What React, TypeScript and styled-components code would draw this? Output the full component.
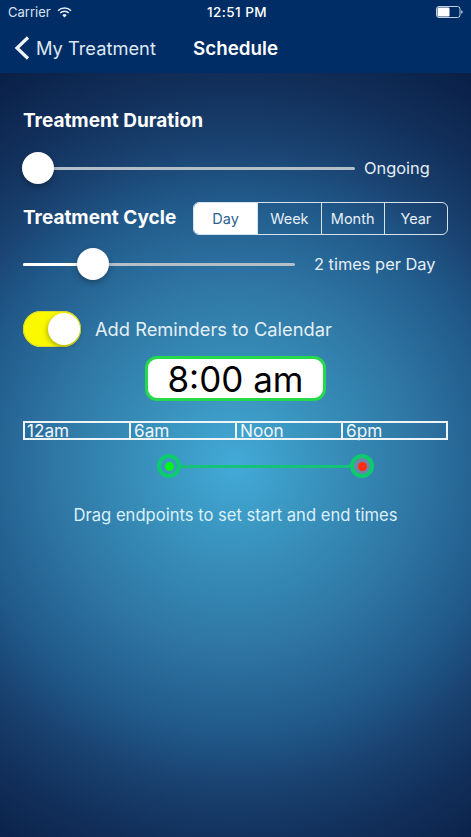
import React, { FC } from "react";
import styled, { createGlobalStyle } from "styled-components";

const GlobalStyle = createGlobalStyle`
    html, body {
        margin: 0;
        padding: 0;
        background: #0c2350;
    }
    * {
        box-sizing: border-box;
    }
`;

const Screen = styled.div`
    width: 471px;
    height: 837px;
    overflow: hidden;
    display: flex;
    flex-direction: column;
    color: #fff;
    font-family: Inter, "Liberation Sans", sans-serif;
`;

const Header = styled.header`
    height: 73px;
    flex: none;
    background: #002d66;
`;

const StatusBar = styled.div`
    height: 24px;
    padding: 0 8px;
    display: grid;
    grid-template-columns: 1fr auto 1fr;
    align-items: center;
    font-size: 13px;
`;

const Carrier = styled.div`
    display: flex;
    align-items: center;
    gap: 6px;
    color: #d8e2ee;
`;

const Clock = styled.div`
    margin-left: 3px;
    font-weight: 500;
    font-size: 13.5px;
    letter-spacing: 0.45px;
`;

const BatteryWrap = styled.div`
    display: flex;
    justify-content: flex-end;
`;

const NavBar = styled.nav`
    height: 49px;
    padding: 0 0 1px 14px;
    display: flex;
    align-items: center;
`;

const BackLink = styled.div`
    width: 179px;
    display: flex;
    align-items: center;
    gap: 6px;
    font-size: 18.3px;
    color: #dfe8f2;
`;

const NavTitle = styled.div`
    font-size: 18.8px;
    font-weight: 600;
`;

const Content = styled.main`
    flex: 1;
    padding: 36px 23px 0 23px;
    background: radial-gradient(
        ellipse 480px 480px at 235px 392px,
        #43aad8 0%,
        #3a96c0 15%,
        #2f76a4 38%,
        #20598a 56%,
        #1a4270 67%,
        #12305c 79%,
        #071a40 100%
    );
`;

const SectionTitle = styled.h2`
    margin: 0;
    height: 24px;
    line-height: 24px;
    font-size: 19px;
    font-weight: 700;
`;

const SliderRow = styled.div<{ $top: number }>`
    display: flex;
    align-items: center;
    height: 34px;
    margin-top: ${(p) => p.$top}px;
`;

const Track = styled.div<{ $width: number }>`
    position: relative;
    width: ${(p) => p.$width}px;
    height: 3px;
    border-radius: 2px;
    background: #b4bfc8;
`;

const TrackFill = styled.div`
    height: 100%;
    border-radius: 2px;
    background: #fff;
`;

const Thumb = styled.div`
    position: absolute;
    top: 50%;
    width: 32px;
    height: 32px;
    margin: -16px 0 0 -16px;
    border-radius: 50%;
    background: #fff;
    box-shadow: 0 3px 6px rgba(0, 0, 0, 0.28);
`;

const SliderLabel = styled.div<{ $gap: number }>`
    margin-left: ${(p) => p.$gap}px;
    font-size: 16.4px;
    color: #e6eef5;
    white-space: nowrap;
`;

const CycleRow = styled.div`
    margin-top: 17px;
    display: flex;
    align-items: center;
    justify-content: space-between;
    height: 32px;
`;

const Segments = styled.div`
    width: 255px;
    height: 33px;
    display: grid;
    grid-template-columns: repeat(4, 1fr);
    border: 1.5px solid #d5e3ee;
    border-radius: 6px;
    overflow: hidden;
`;

const Segment = styled.div<{ $active?: boolean }>`
    display: flex;
    align-items: center;
    justify-content: center;
    font-size: 14.5px;
    background: ${(p) => (p.$active ? "#fff" : "transparent")};
    color: ${(p) => (p.$active ? "#2a6390" : "#e8f0f6")};
    & + & {
        border-left: 1.5px solid #d5e3ee;
    }
`;

const ToggleRow = styled.div`
    margin-top: 30px;
    display: flex;
    align-items: center;
    gap: 14px;
    height: 36px;
`;

const ToggleBody = styled.div`
    position: relative;
    width: 58px;
    height: 36px;
    border-radius: 18px;
    background: #fbf900;
    box-shadow: inset 0 0 0 1px #d9d828;
`;

const ToggleKnob = styled.div`
    position: absolute;
    top: 2px;
    right: 1px;
    width: 32px;
    height: 32px;
    border-radius: 50%;
    background: #fff;
    box-shadow: -1px 2px 5px rgba(0, 0, 0, 0.3);
`;

const ToggleLabel = styled.div`
    font-size: 18.3px;
    color: #e6f0f6;
`;

const TimeBox = styled.div`
    margin: 9px auto 0;
    width: 181px;
    height: 45px;
    display: flex;
    align-items: center;
    justify-content: center;
    background: #fff;
    border: 3px solid #25d84c;
    border-radius: 12px;
    color: #000;
    font-size: 35px;
`;

const Timeline = styled.div`
    margin-top: 20px;
    width: 425px;
    height: 19px;
    display: grid;
    grid-template-columns: 104px 106px 106px 1fr;
    border: 2px solid #eef5f9;
`;

const TimelineCell = styled.div`
    padding-left: 2px;
    font-size: 17.2px;
    line-height: 16px;
    color: #f0f6fa;
    & + & {
        padding-left: 3px;
        border-left: 2px solid #eef5f9;
    }
`;

const RangeRow = styled.div`
    margin: 14px 0 0 134px;
    width: 217px;
    height: 24px;
    display: flex;
    align-items: center;
`;

const Handle = styled.div<{ $dot: string; $fill: string }>`
    flex: none;
    width: 24px;
    height: 24px;
    display: flex;
    align-items: center;
    justify-content: center;
    border: 4px solid #0ccb6e;
    border-radius: 50%;
    background: ${(p) => p.$fill};
    &::after {
        content: "";
        width: 9px;
        height: 9px;
        border-radius: 50%;
        background: ${(p) => p.$dot};
    }
`;

const RangeLine = styled.div`
    flex: 1;
    height: 3px;
    background: #14c27a;
`;

const Hint = styled.p`
    margin: 27px 0 0;
    text-align: center;
    font-size: 16.6px;
    line-height: 20px;
    color: #dcf0fa;
`;

const WifiIcon: FC = () => (
    <svg width="15" height="11" viewBox="0 0 15 11" fill="none">
        <path d="M1 3.8a9.2 9.2 0 0 1 13 0" stroke="#e6edf4" strokeWidth="1.5" />
        <path d="M3.2 6a6.1 6.1 0 0 1 8.6 0" stroke="#e6edf4" strokeWidth="1.5" />
        <path d="M7.5 10.6 5.3 8.2a3.1 3.1 0 0 1 4.4 0z" fill="#e6edf4" />
    </svg>
);

const BatteryIcon: FC = () => (
    <svg width="27" height="12" viewBox="0 0 27 12" fill="none">
        <rect x="0.5" y="0.5" width="23.5" height="11" rx="2.5" stroke="#c4d0de" />
        <rect x="1.5" y="1.5" width="12" height="9" rx="1.2" fill="#fff" />
        <path d="M25.2 4.2c1 .3 1.5 1 1.5 1.8s-.5 1.5-1.5 1.8z" fill="#c4d0de" />
    </svg>
);

const BackChevron: FC = () => (
    <svg width="16" height="24" viewBox="0 0 16 24" fill="none">
        <path d="M14 1.5 3 12 14 22.5" stroke="#f0f4f8" strokeWidth="3.2" />
    </svg>
);

type SliderProps = {
    width: number;
    value: number;
    filled?: boolean;
};
const Slider: FC<SliderProps> = ({ width, value, filled }) => (
    <Track $width={width}>
        {filled && <TrackFill style={{ width: value }} />}
        <Thumb style={{ left: value }} />
    </Track>
);

const cycles = ["Day", "Week", "Month", "Year"];
const hours = ["12am", "6am", "Noon", "6pm"];

export default function App() {
    return (
        <Screen>
            <GlobalStyle />
            <Header>
                <StatusBar>
                    <Carrier>
                        Carrier
                        <WifiIcon />
                    </Carrier>
                    <Clock>12:51 PM</Clock>
                    <BatteryWrap>
                        <BatteryIcon />
                    </BatteryWrap>
                </StatusBar>
                <NavBar>
                    <BackLink>
                        <BackChevron />
                        My Treatment
                    </BackLink>
                    <NavTitle>Schedule</NavTitle>
                </NavBar>
            </Header>
            <Content>
                <SectionTitle>Treatment Duration</SectionTitle>
                <SliderRow $top={18}>
                    <Slider width={332} value={15} />
                    <SliderLabel $gap={9}>Ongoing</SliderLabel>
                </SliderRow>
                <CycleRow>
                    <SectionTitle>Treatment Cycle</SectionTitle>
                    <Segments>
                        {cycles.map((cycle, i) => (
                            <Segment key={cycle} $active={i === 0}>
                                {cycle}
                            </Segment>
                        ))}
                    </Segments>
                </CycleRow>
                <SliderRow $top={13}>
                    <Slider width={272} value={70} filled />
                    <SliderLabel $gap={19}>2 times per Day</SliderLabel>
                </SliderRow>
                <ToggleRow>
                    <ToggleBody>
                        <ToggleKnob />
                    </ToggleBody>
                    <ToggleLabel>Add Reminders to Calendar</ToggleLabel>
                </ToggleRow>
                <TimeBox>8:00 am</TimeBox>
                <Timeline>
                    {hours.map((hour) => (
                        <TimelineCell key={hour}>{hour}</TimelineCell>
                    ))}
                </Timeline>
                <RangeRow>
                    <Handle $dot="#00f51a" $fill="transparent" />
                    <RangeLine />
                    <Handle $dot="#ff2d12" $fill="#6d86a8" />
                </RangeRow>
                <Hint>Drag endpoints to set start and end times</Hint>
            </Content>
        </Screen>
    );
}
